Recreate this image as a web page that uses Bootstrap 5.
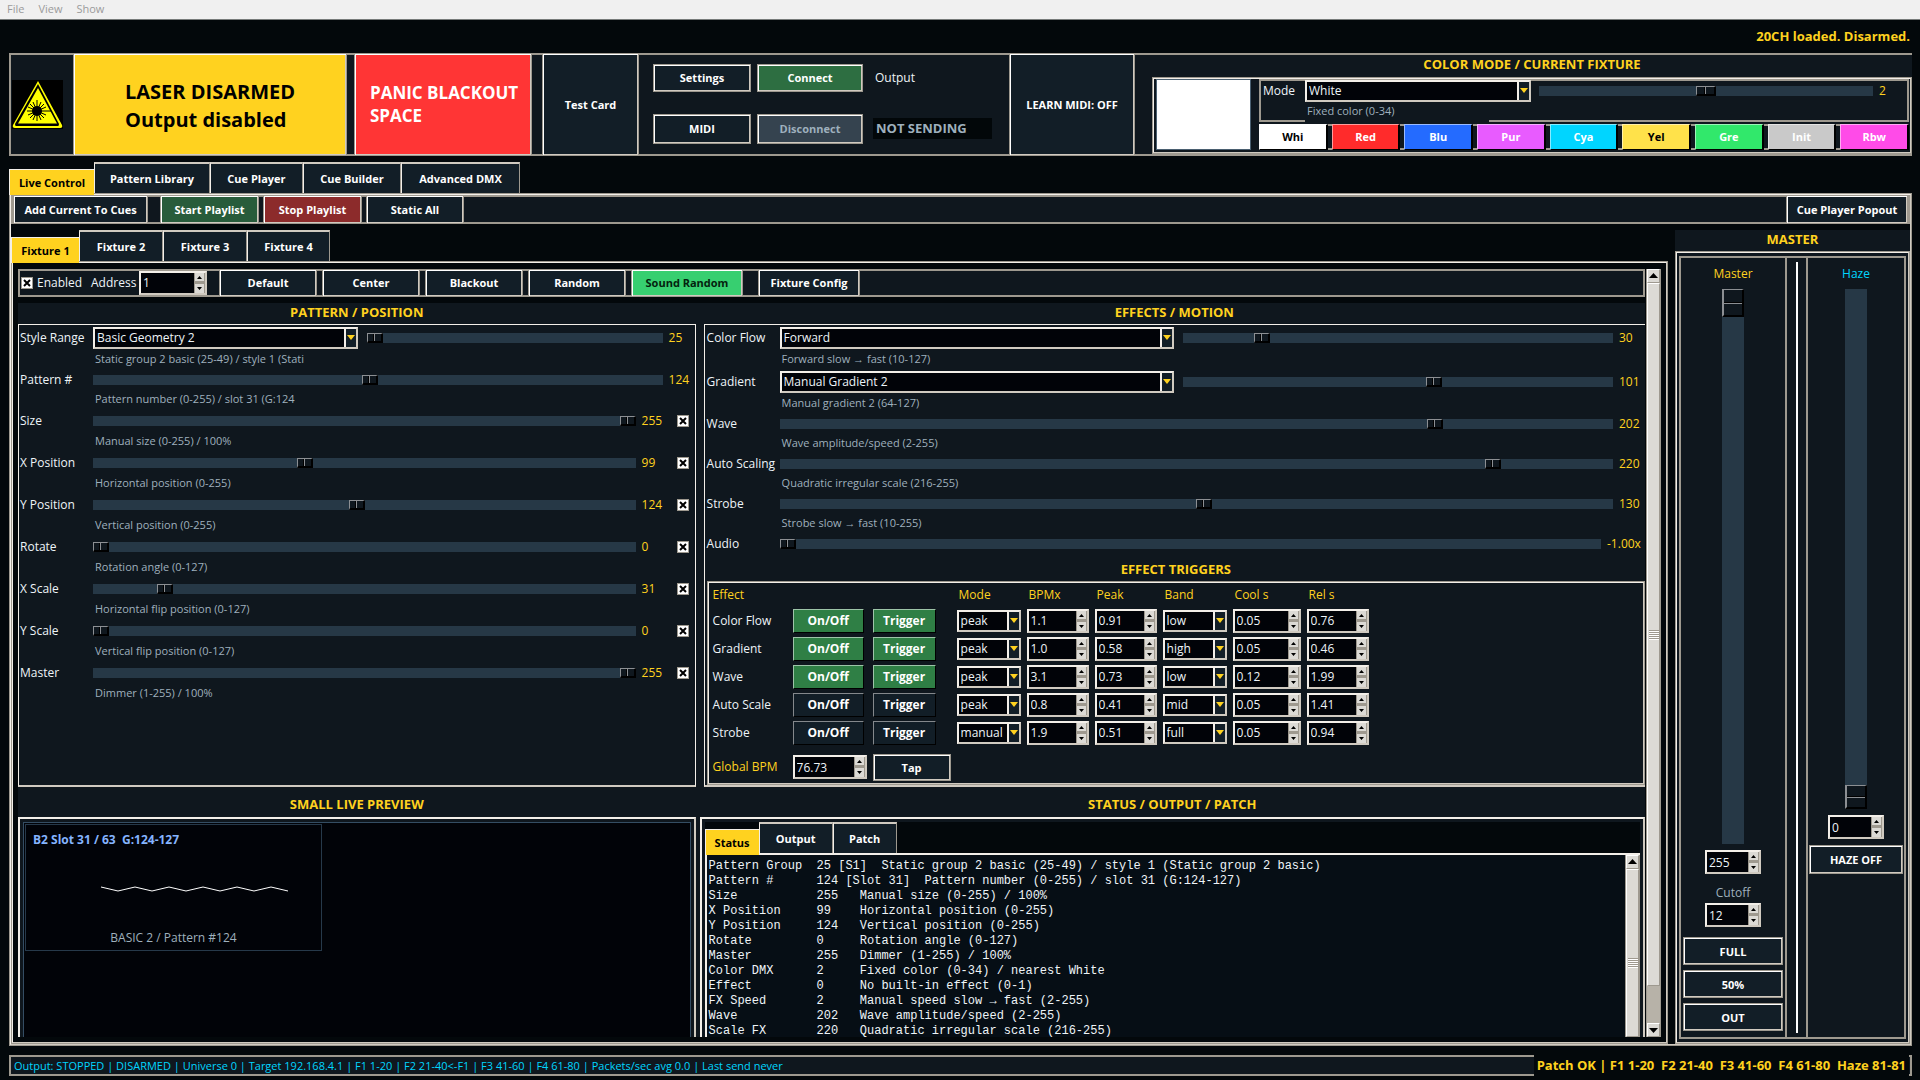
<!DOCTYPE html>
<html lang="en">
<head>
<meta charset="utf-8">
<meta name="viewport" content="width=device-width, initial-scale=1">
<title>Laser Control</title>
<link href="https://cdn.jsdelivr.net/npm/bootstrap@5.3.0/dist/css/bootstrap.min.css" rel="stylesheet">
<style>
:root{--bg:#03080b;--panel:#0f171e;--btn:#121e27;--field:#010308;--trough:#263846;--gold:#ffd21f;--text:#eef4f8;--muted:#9fb0bd;--cyan:#00d5ff;--hi:#f3efe9;--lo:#9e998f;--mid:#d0cac0}
body{background:var(--bg);color:var(--text);font:12px/16px "Open Sans","Noto Sans",sans-serif;height:100vh;overflow:hidden}
button,input,select{font:inherit;color:inherit;border-radius:0;margin:0}
.side{margin-left:9px;margin-right:8px}
.menubar{height:20px;background:#f0f0f0;border-bottom:1px solid #777b7a;padding:0 7px;gap:14px}
.menubar a{color:#9b9b9b;text-decoration:none;line-height:18px;font-size:11px}
.gold{color:var(--gold)}
.ttl{color:var(--gold);font:700 13px/19px "Open Sans","Noto Sans",sans-serif;text-align:center;margin:0;padding-bottom:2px;background:var(--panel)}
.trough-frame{background:var(--panel);box-shadow:inset 0 0 0 2px var(--lo)}
.lined{border:2px solid;border-color:var(--hi) var(--mid) var(--mid) var(--hi);outline:1px solid var(--lo);outline-offset:-1px}
.tb{background:var(--btn);color:#fff;font-weight:700;font-size:11px;border:1px solid var(--lo);box-shadow:inset 1px 1px 0 #fff,inset -1px -1px 0 var(--mid);padding:1px 6px 0;white-space:nowrap}
.tb.arm{background:var(--gold);color:#000;font-size:20px;line-height:28px;text-align:left;padding:4px 0 0 51px;width:274px}
.tb.panic{background:#ff3535;font-size:17px;line-height:23px;text-align:left;padding:0 0 0 15px;width:178px}
.tb.go{background:#2d6e41}
.tb.off{background:#35434f;color:#9eb0bd}
.tb.play{background:#285c3b}
.tb.halt{background:#8c2b2b}
.tb.live{background:#37cf70;color:#04220e}
.w98{width:98px}
.head{height:103px}
.grid-conn{display:grid;grid-template-columns:98px 106px 123px;column-gap:6px;row-gap:22px;padding:11px 12px 12px 14px;width:370px}
.notsend{background:#020709;color:#9eb0bd;font:700 13px/21px "Open Sans",sans-serif;padding-left:3px}
.swatch{border:1px solid;border-color:#fff8 #000 #000 #fff8;border-width:1px 2px 1px 1px;color:#fff;font-size:11px;font-weight:700;flex:1 1 0;padding:0;min-width:0}
.tabrow .tabx{background:var(--btn);border:1px solid var(--lo);border-top:2px solid var(--mid);border-left-color:var(--hi);border-bottom:0;height:31px;font-weight:700;font-size:11px;color:#fff;padding:1px 0 0}
.tabrow .tabx.on{background:var(--gold);color:#000;height:26px;margin-bottom:-2px;position:relative;border-top:1px solid var(--hi);border-right:0}
.combo{appearance:none;border:2px solid var(--hi);border-color:var(--hi) var(--mid) var(--mid) var(--hi);height:22px;padding:0 14px 0 2px;line-height:18px;background:url("data:image/svg+xml,%3Csvg xmlns='http://www.w3.org/2000/svg' width='8' height='5'%3E%3Cpath d='M0 0h8L4 5z' fill='%23ffd21f'/%3E%3C/svg%3E") right 1px center no-repeat,linear-gradient(to right,#f3efe9 2px,#121e27 2px) right/12px 100% no-repeat,var(--field)}
.spin{border:2px solid var(--hi);border-color:var(--hi) var(--mid) var(--mid) var(--hi);height:24px;padding:0 0 0 2px;background:var(--field);line-height:20px}
.spin::-webkit-inner-spin-button{appearance:none;-webkit-appearance:none;opacity:1;width:11px;height:20px;background:url("data:image/svg+xml,%3Csvg xmlns='http://www.w3.org/2000/svg' width='11' height='20'%3E%3Cpath d='M0 0h11v20H0z' fill='%239e998f'/%3E%3Cpath d='M1 0h9v8H1zM1 11h9v9H1z' fill='%23dcdad5'/%3E%3Cpath d='M3 6h5L5.500 3zM3 14h5l-2.500 3z'/%3E%3C/svg%3E") center/11px 20px no-repeat}
.tick{appearance:none;width:12px;height:12px;flex:none;border:1px solid var(--lo);background:#fff url("data:image/svg+xml,%3Csvg xmlns='http://www.w3.org/2000/svg' width='10' height='10'%3E%3Cpath d='M2 2l6 6M8 2L2 8' stroke='%23000' stroke-width='2'/%3E%3C/svg%3E") center no-repeat}
.hs{appearance:none;-webkit-appearance:none;background:var(--trough);height:10px;flex:1 1 0;min-width:0}
.hs::-webkit-slider-thumb{-webkit-appearance:none;width:16px;height:10px;border:solid;border-width:1px 2px 2px 1px;border-color:#8c8f93 #000 #000 #8c8f93;background:linear-gradient(to right,#0f171e 5px,#000 5px 6px,#8c8f93 6px 7px,#0f171e 7px)}
.hs.wide::-webkit-slider-thumb{width:20px;background:linear-gradient(to right,#0f171e 7px,#000 7px 8px,#8c8f93 8px 9px,#0f171e 9px)}
.vs{appearance:none;-webkit-appearance:none;writing-mode:vertical-lr;direction:rtl;background:var(--trough);width:22px;flex:1 1 0;min-height:0}
.vs::-webkit-slider-thumb{-webkit-appearance:none;width:22px;height:28px;border:solid;border-width:1px 2px 2px 2px;border-color:#8c8f93 #000 #000 #8c8f93;background:linear-gradient(#0f171e 12px,#000 12px 13px,#8c8f93 13px 14px,#0f171e 14px)}
.vs.short::-webkit-slider-thumb{height:24px;background:linear-gradient(#0f171e 10px,#000 10px 11px,#8c8f93 11px 12px,#0f171e 12px)}
.ctl{display:flex;align-items:center;height:20px}
.ctl>label{width:73px;flex:none;white-space:nowrap;padding-top:1px}
.ctl .val{color:var(--gold);padding:1px 0 0 6px;width:32px;flex:none;white-space:nowrap}
.ctl.sel{height:24px}
.ctl.chk{height:22px}
.ctl.chk .val{width:41px}
.ctl.chk .tick{margin-right:6px}
.hint{color:var(--muted);font-size:11px;height:20px;line-height:18px;padding-left:75px;white-space:nowrap}
.fx{table-layout:fixed;width:661px;border-collapse:collapse}
.fx td,.fx th{padding:0;height:28px;font-weight:400;vertical-align:middle}
.fx th{height:24px;color:var(--gold);padding-left:2px;line-height:14px}
.fx td:first-child,.fx th:first-child{padding-left:4px}
.fb{background:var(--btn);border:1px solid;border-color:#84888c #000 #000 #84888c;color:#fff;font-weight:700;font-size:12px;height:24px;padding:0;display:block}
.fb.on{background:#2f7f45;border-color:#9dc4a8 #000 #000 #9dc4a8}
.fx .combo,.fx .spin{display:block}
.bar{width:15px;background:#b7b2a8;border:solid var(--lo);border-width:0 1px;flex:none}
.bar .arrow{height:14px;background:#dcdad5;border:1px solid;border-color:#fff var(--lo) var(--lo) #fff;padding:0;line-height:0;width:100%;flex:none}
.bar .thumb{background:#dcdad5;border:1px solid;border-color:#fff var(--lo) var(--lo) #fff}
.grip{width:10px;height:10px;background:repeating-linear-gradient(#9e998f 0 1px,#fff 1px 2px)}
.log{background:#060e15;color:#eef4f8;font:12px/15px "Liberation Mono",monospace;margin:0;padding:4px 0 0 2px;overflow:hidden}
.foot{height:21px;margin-top:9px;margin-bottom:4px}
</style>
</head>
<body class="d-flex flex-column">
<nav class="menubar d-flex flex-none"><a href="#">File</a><a href="#">View</a><a href="#">Show</a></nav>
<div class="text-end gold fw-bold" style="font-size:13px;line-height:33px;padding-right:10px">20CH loaded. Disarmed.</div>

<header class="head trough-frame d-flex side flex-shrink-0">
  <div class="d-flex align-items-center flex-shrink-0" style="width:64px;padding-left:3px">
    <svg width="51" height="49" viewBox="0 0 51 49"><path d="M0 0h51v49H0z"/><path d="M26 1 50 45q1 3-2 3H3q-3 0-2-3z" fill="#ff0"/><path d="M26 4 47 44q0 2-1 2H4q-1 0-1-2z"/><path d="M26 8 45 43.500H6z" fill="#ff0"/><circle cx="25" cy="31" r="5"/><path d="M25 20v21M15 31h24M18 24l14 14M32 24 18 38M21 22l8 18M29 22l-8 18M16 27l18 8M34 27l-18 8" stroke="#000" stroke-width="1"/></svg>
  </div>
  <button class="tb arm">LASER DISARMED<br>Output disabled</button>
  <button class="tb panic" style="margin:0 10px 0 7px">PANIC BLACKOUT<br>SPACE</button>
  <button class="tb" style="width:97px">Test Card</button>
  <div class="grid-conn">
    <button class="tb">Settings</button><button class="tb go">Connect</button><span class="align-self-center" style="padding-left:6px">Output</span>
    <button class="tb">MIDI</button><button class="tb off" disabled>Disconnect</button><span class="notsend align-self-center ms-1">NOT SENDING</span>
  </div>
  <button class="tb" style="width:126px">LEARN MIDI: OFF</button>
  <section class="flex-fill d-flex flex-column" style="padding:2px 0 2px 17px">
    <h2 class="ttl" style="padding-bottom:3px">COLOR MODE / CURRENT FIXTURE</h2>
    <div class="lined d-flex flex-fill" style="padding:0 1px 1px 2px">
      <div style="width:95px;margin:0 8px 1px 0;background:#fff;border:1px solid #4a5f70"></div>
      <div class="flex-fill d-flex flex-column">
        <div class="trough-frame" style="height:43px;padding:1px 4px">
          <div class="ctl sel" style="height:22px"><label for="cm" style="width:42px">Mode</label><select id="cm" class="combo" style="width:226px;margin-right:8px"><option>White</option></select><input type="range" class="hs wide" min="0" max="4" value="2" aria-label="Color value"><output class="val">2</output></div>
          <div class="hint" style="margin-left:42px;padding-left:2px;width:184px;background:var(--panel)">Fixed color (0-34)</div>
        </div>
        <div class="trough-frame d-flex" style="height:26px;margin-top:2px;gap:4px">
          <button class="swatch" style="background:#fff;color:#000">Whi</button><button class="swatch" style="background:#ff2b2b">Red</button><button class="swatch" style="background:#246bff">Blu</button><button class="swatch" style="background:#e85bff">Pur</button><button class="swatch" style="background:#00d5ff">Cya</button><button class="swatch" style="background:#ffe24a;color:#000">Yel</button><button class="swatch" style="background:#31e86b">Gre</button><button class="swatch" style="background:#c9c9c9">Init</button><button class="swatch" style="background:#ff4be8">Rbw</button>
        </div>
      </div>
    </div>
  </section>
</header>

<div class="tabrow d-flex align-items-end side flex-shrink-0" style="margin-top:6px">
  <button class="tabx on" style="width:85px">Live Control</button><button class="tabx" style="width:116px">Pattern Library</button><button class="tabx" style="width:93px">Cue Player</button><button class="tabx" style="width:98px">Cue Builder</button><button class="tabx" style="width:119px">Advanced DMX</button>
</div>
<main class="lined side flex-fill d-flex flex-column" style="min-height:0">
  <div class="trough-frame d-flex flex-shrink-0" style="height:29px;padding:0 2px">
    <button class="tb" style="width:135px">Add Current To Cues</button><button class="tb play" style="width:99px;margin-left:12px">Start Playlist</button><button class="tb halt" style="width:99px;margin:0 4px">Stop Playlist</button><button class="tb w98">Static All</button><button class="tb ms-auto" style="width:122px">Cue Player Popout</button>
  </div>
  <div class="d-flex flex-fill" style="min-height:0;margin-top:6px;gap:7px">
    <section class="flex-fill d-flex flex-column" style="min-width:0">
      <div class="tabrow d-flex align-items-end flex-shrink-0">
        <button class="tabx on" style="width:68px">Fixture 1</button><button class="tabx" style="width:84px">Fixture 2</button><button class="tabx" style="width:84px">Fixture 3</button><button class="tabx" style="width:83px">Fixture 4</button>
      </div>
      <div class="lined flex-fill d-flex" style="min-height:0;padding:6px 5px 5px">
        <div class="flex-fill d-flex flex-column overflow-hidden" style="min-width:0">
          <div class="trough-frame d-flex align-items-center flex-shrink-0" style="height:28px;padding-left:3px">
            <input type="checkbox" class="tick" id="en" checked><label for="en" style="padding-left:4px;width:58px">Enabled</label><label for="ad" style="width:48px">Address</label><input id="ad" type="number" class="spin" style="width:68px;margin-right:12px" value="1">
            <div class="d-flex align-self-stretch" style="gap:5px"><button class="tb w98">Default</button><button class="tb w98">Center</button><button class="tb w98">Blackout</button><button class="tb w98">Random</button><button class="tb live" style="width:112px">Sound Random</button><button class="tb" style="width:102px;margin-left:10px">Fixture Config</button></div>
          </div>
          <div class="flex-fill d-flex flex-column" style="margin-top:6px;background:var(--panel);min-height:0">
            <div class="d-flex flex-shrink-0" style="gap:8px">
              <section class="d-flex flex-column" style="flex:678 1 0;min-width:0">
                <h2 class="ttl">PATTERN / POSITION</h2>
                <div class="flex-fill" style="border:1px solid var(--hi);border-bottom:2px solid var(--mid);padding:1px 0 0 1px">
                  <div class="ctl sel"><label for="p0">Style Range</label><select id="p0" class="combo" style="width:265px;margin-right:9px"><option>Basic Geometry 2</option></select><input type="range" class="hs" min="25" max="49" value="25" aria-label="Style value"><output class="val">25</output></div><div class="hint">Static group 2 basic (25-49) / style 1 (Stati</div>
                  <div class="ctl"><label for="p1">Pattern #</label><input id="p1" type="range" class="hs" max="255" value="124"><output class="val">124</output></div><div class="hint">Pattern number (0-255) / slot 31 (G:124</div>
                  <div class="ctl chk"><label for="p2">Size</label><input id="p2" type="range" class="hs" max="255" value="255"><output class="val">255</output><input type="checkbox" class="tick" checked aria-label="Size active"></div><div class="hint">Manual size (0-255) / 100%</div>
                  <div class="ctl chk"><label for="p3">X Position</label><input id="p3" type="range" class="hs" max="255" value="99"><output class="val">99</output><input type="checkbox" class="tick" checked aria-label="X Position active"></div><div class="hint">Horizontal position (0-255)</div>
                  <div class="ctl chk"><label for="p4">Y Position</label><input id="p4" type="range" class="hs" max="255" value="124"><output class="val">124</output><input type="checkbox" class="tick" checked aria-label="Y Position active"></div><div class="hint">Vertical position (0-255)</div>
                  <div class="ctl chk"><label for="p5">Rotate</label><input id="p5" type="range" class="hs" max="255" value="0"><output class="val">0</output><input type="checkbox" class="tick" checked aria-label="Rotate active"></div><div class="hint">Rotation angle (0-127)</div>
                  <div class="ctl chk"><label for="p6">X Scale</label><input id="p6" type="range" class="hs" max="255" value="31"><output class="val">31</output><input type="checkbox" class="tick" checked aria-label="X Scale active"></div><div class="hint">Horizontal flip position (0-127)</div>
                  <div class="ctl chk"><label for="p7">Y Scale</label><input id="p7" type="range" class="hs" max="255" value="0"><output class="val">0</output><input type="checkbox" class="tick" checked aria-label="Y Scale active"></div><div class="hint">Vertical flip position (0-127)</div>
                  <div class="ctl chk"><label for="p8">Master</label><input id="p8" type="range" class="hs" max="255" value="255"><output class="val">255</output><input type="checkbox" class="tick" checked aria-label="Master active"></div><div class="hint">Dimmer (1-255) / 100%</div>
                </div>
              </section>
              <section class="d-flex flex-column" style="flex:942 1 0;min-width:0">
                <h2 class="ttl">EFFECTS / MOTION</h2>
                <div class="flex-fill" style="border:1px solid var(--hi);border-width:1px 0 2px 1px;border-bottom-color:var(--mid);padding:1px 0 0 2px">
                  <div class="ctl sel"><label for="e0">Color Flow</label><select id="e0" class="combo flex-shrink-0" style="width:42%;margin-right:9px"><option>Forward</option></select><input type="range" class="hs" min="10" max="127" value="30" aria-label="Color flow speed"><output class="val">30</output></div><div class="hint">Forward slow → fast (10-127)</div>
                  <div class="ctl sel"><label for="e1">Gradient</label><select id="e1" class="combo flex-shrink-0" style="width:42%;margin-right:9px"><option>Manual Gradient 2</option></select><input type="range" class="hs" min="64" max="127" value="101" aria-label="Gradient value"><output class="val">101</output></div><div class="hint">Manual gradient 2 (64-127)</div>
                  <div class="ctl"><label for="e2">Wave</label><input id="e2" type="range" class="hs" max="255" value="202"><output class="val">202</output></div><div class="hint">Wave amplitude/speed (2-255)</div>
                  <div class="ctl"><label for="e3">Auto Scaling</label><input id="e3" type="range" class="hs" max="255" value="220"><output class="val">220</output></div><div class="hint">Quadratic irregular scale (216-255)</div>
                  <div class="ctl"><label for="e4">Strobe</label><input id="e4" type="range" class="hs" max="255" value="130"><output class="val">130</output></div><div class="hint">Strobe slow → fast (10-255)</div>
                  <div class="ctl"><label for="e5">Audio</label><input id="e5" type="range" class="hs" min="-1" max="1" value="-1"><output class="val" style="width:44px">-1.00x</output></div>
                  <h2 class="ttl" style="margin-top:6px">EFFECT TRIGGERS</h2>
                  <div class="lined" style="padding-bottom:2px">
                    <table class="fx">
                      <colgroup><col style="width:84px"><col style="width:80px"><col style="width:84px"><col style="width:70px"><col style="width:68px"><col style="width:68px"><col style="width:70px"><col style="width:74px"><col style="width:63px"></colgroup>
                      <thead><tr><th>Effect</th><th></th><th></th><th>Mode</th><th>BPMx</th><th>Peak</th><th>Band</th><th>Cool s</th><th>Rel s</th></tr></thead>
                      <tbody id="fxRows"></tbody>
                    </table>
                    <div class="d-flex align-items-center" style="padding:7px 0 0 4px"><label for="gb" class="gold" style="width:80px">Global BPM</label><input id="gb" type="number" class="spin" step="0.01" value="76.73" style="width:74px;margin-right:6px"><button class="tb" style="width:78px;height:27px">Tap</button></div>
                  </div>
                </div>
              </section>
            </div>
            <div class="d-flex flex-fill" style="gap:4px;padding-top:8px;min-height:0">
              <section class="d-flex flex-column" style="flex:678 1 0;min-width:0">
                <h2 class="ttl" style="padding-bottom:3px">SMALL LIVE PREVIEW</h2>
                <div class="flex-fill" style="border:2px solid var(--hi);border-bottom:0;border-right-color:var(--mid);padding:3px 3px 0">
                  <div class="h-100" style="background:#010308;border:1px solid #344d63;border-bottom:0;padding:1px">
                    <div class="d-flex flex-column" style="width:297px;height:127px;border:1px solid #26394a;padding:7px">
                      <div class="fw-bold" style="color:#85b4ff">B2 Slot 31 / 63&nbsp; G:124-127</div>
                      <svg class="flex-shrink-0" width="188" height="6" viewBox="0 0 188 6" style="margin:38px 0 38px 68px"><polyline points="0,1 17,5 34,1 51,5 68,1 85,5 102,1 119,5 136,1 153,5 170,1 187,5" fill="none" stroke="#fff"/></svg>
                      <div class="text-center" style="color:var(--muted)">BASIC 2 / Pattern #124</div>
                    </div>
                  </div>
                </div>
              </section>
              <section class="d-flex flex-column" style="flex:946 1 0;min-width:0">
                <h2 class="ttl" style="padding-bottom:3px">STATUS / OUTPUT / PATCH</h2>
                <div class="flex-fill d-flex flex-column" style="border:2px solid var(--hi);border-bottom:0;border-right-color:var(--mid);padding:3px 3px 0;min-height:0">
                  <div class="tabrow d-flex align-items-end flex-shrink-0" style="background:var(--bg)"><button class="tabx on" style="width:54px">Status</button><button class="tabx" style="width:74px">Output</button><button class="tabx" style="width:64px">Patch</button></div>
                  <div class="d-flex flex-fill" style="min-height:0;border:2px solid var(--hi);border-bottom:0;border-right:0">
<pre class="log flex-fill">Pattern Group  25 [S1]  Static group 2 basic (25-49) / style 1 (Static group 2 basic)
Pattern #      124 [Slot 31]  Pattern number (0-255) / slot 31 (G:124-127)
Size           255   Manual size (0-255) / 100%
X Position     99    Horizontal position (0-255)
Y Position     124   Vertical position (0-255)
Rotate         0     Rotation angle (0-127)
Master         255   Dimmer (1-255) / 100%
Color DMX      2     Fixed color (0-34) / nearest White
Effect         0     No built-in effect (0-1)
FX Speed       2     Manual speed slow → fast (2-255)
Wave           202   Wave amplitude/speed (2-255)
Scale FX       220   Quadratic irregular scale (216-255)</pre>
                    <div class="bar d-flex flex-column"><button class="arrow" aria-label="Scroll log up"><svg width="9" height="5"><path d="M0 5h9L4.500 0z"/></svg></button><div class="thumb flex-fill d-flex align-items-center justify-content-center" style="padding-top:20px"><span class="grip"></span></div></div>
                  </div>
                </div>
              </section>
            </div>
          </div>
        </div>
        <div class="bar d-flex flex-column" style="margin-left:1px"><button class="arrow" aria-label="Scroll up"><svg width="9" height="5"><path d="M0 5h9L4.500 0z"/></svg></button><div class="thumb d-flex align-items-center justify-content-center" style="flex:703 1 0"><span class="grip"></span></div><div style="flex:37 1 0"></div><button class="arrow" aria-label="Scroll down"><svg width="9" height="5"><path d="M0 0h9L4.500 5z"/></svg></button></div>
      </div>
    </section>

    <aside class="d-flex flex-column flex-shrink-0" style="width:235px">
      <h2 class="ttl">MASTER</h2>
      <div class="lined flex-fill d-flex" style="padding:3px 2px;min-height:0;background:var(--panel)">
        <div class="trough-frame d-flex flex-column align-items-center" style="width:108px;padding:10px 4px 8px">
          <label for="mf" class="gold">Master</label>
          <input id="mf" type="range" class="vs" max="255" value="255" style="margin:7px 0 6px">
          <input type="number" class="spin" value="255" style="width:56px" aria-label="Master level">
          <label for="co" style="color:var(--muted);margin:11px 0 2px">Cutoff</label>
          <input id="co" type="number" class="spin" value="12" style="width:56px;margin-bottom:10px">
          <div class="d-grid w-100" style="gap:5px;grid-auto-rows:28px"><button class="tb">FULL</button><button class="tb">50%</button><button class="tb">OUT</button></div>
        </div>
        <div class="d-flex justify-content-center" style="width:19px;border:solid var(--lo);border-width:2px 0;padding:4px 0"><div style="width:2px;background:#fff"></div></div>
        <div class="trough-frame d-flex flex-column align-items-center flex-fill" style="padding:10px 3px 165px">
          <label for="hf" style="color:var(--cyan)">Haze</label>
          <input id="hf" type="range" class="vs short" max="255" value="0" style="margin:7px 0 6px">
          <input type="number" class="spin" value="0" style="width:56px" aria-label="Haze level">
          <button class="tb w-100" style="height:29px;margin-top:6px">HAZE OFF</button>
        </div>
      </div>
    </aside>
  </div>
</main>
<footer class="foot side trough-frame d-flex align-items-center justify-content-between flex-shrink-0">
  <span style="color:var(--cyan);font-size:11px;line-height:17px;background:var(--panel);margin-left:2px;padding:0 2px 0 3px">Output: STOPPED | DISARMED | Universe 0 | Target 192.168.4.1 | F1 1-20 | F2 21-40&lt;-F1 | F3 41-60 | F4 61-80 | Packets/sec avg 0.0 | Last send never</span>
  <span class="gold fw-bold" style="font-size:13px;line-height:21px;background:var(--bg);padding:0 3px;margin-right:3px">Patch OK | F1 1-20&nbsp; F2 21-40&nbsp; F3 41-60&nbsp; F4 61-80&nbsp; Haze 81-81</span>
</footer>
<script src="https://cdn.jsdelivr.net/npm/bootstrap@5.3.0/dist/js/bootstrap.bundle.min.js"></script>
<script>
const effects = [
  ['Color Flow', true, 'peak', '1.1', '0.91', 'low', '0.05', '0.76'],
  ['Gradient', true, 'peak', '1.0', '0.58', 'high', '0.05', '0.46'],
  ['Wave', true, 'peak', '3.1', '0.73', 'low', '0.12', '1.99'],
  ['Auto Scale', false, 'peak', '0.8', '0.41', 'mid', '0.05', '1.41'],
  ['Strobe', false, 'manual', '1.9', '0.51', 'full', '0.05', '0.94']
];
const combo = (name, v) => `<td><select class="combo" style="width:64px" aria-label="${name}"><option>${v}</option></select></td>`;
const spin = (name, v, w) => `<td><input type="number" step="0.01" class="spin" style="width:${w}px" value="${v}" aria-label="${name}"></td>`;
document.getElementById('fxRows').innerHTML = effects.map(([n, on, mode, bpm, peak, band, cool, rel]) => {
  const c = on ? 'fb on' : 'fb';
  return `<tr><td>${n}</td><td><button class="${c}" style="width:71px">On/Off</button></td><td><button class="${c}" style="width:63px">Trigger</button></td>` +
    combo(n + ' mode', mode) + spin(n + ' BPM multiplier', bpm, 62) + spin(n + ' peak', peak, 62) + combo(n + ' band', band) +
    spin(n + ' cooldown', cool, 68) + spin(n + ' release', rel, 62) + '</tr>';
}).join('');
</script>
</body>
</html>
